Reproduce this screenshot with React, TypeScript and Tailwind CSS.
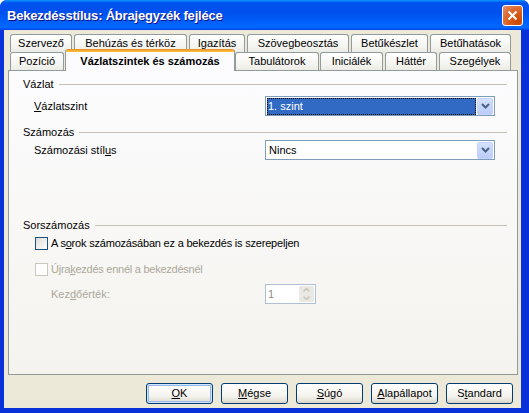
import React from "react";

const ROW1 = [
  { label: "Szervező", cls: "w-[62px]" },
  { label: "Behúzás és térköz", cls: "w-[113px]" },
  { label: "Igazítás", cls: "w-[56px]" },
  { label: "Szövegbeosztás", cls: "w-[102px]" },
  { label: "Betűkészlet", cls: "w-[77px]" },
  { label: "Betűhatások", cls: "w-[81px]" },
];

const ROW2_RIGHT = [
  { label: "Tabulátorok", cls: "w-[84px]" },
  { label: "Iniciálék", cls: "w-[63px] ml-[1px]" },
  { label: "Háttér", cls: "w-[52px] ml-[2px]" },
  { label: "Szegélyek", cls: "w-[72px] ml-[2px]" },
];

function Tab({ label, cls }: { label: string; cls: string }) {
  return (
    <div
      className={`${cls} flex h-[18px] items-center justify-center rounded-t-[3px] border border-b-0
      border-[#919b9c] bg-[linear-gradient(180deg,#ffffff,#f3f3ef_70%,#ecebe5)] text-[11px] leading-none text-black`}
    >
      {label}
    </div>
  );
}

function Chevron({ color = "#4d6185" }: { color?: string }) {
  return (
    <svg width="9" height="6" viewBox="0 0 9 6">
      <path d="M1 1 L4.5 4.5 L8 1" fill="none" stroke={color} strokeWidth="2" />
    </svg>
  );
}

function DropButton() {
  return (
    <div className="flex h-[17px] w-[16px] items-center justify-center rounded-[2px] border border-[#c3d3fd]
      bg-[linear-gradient(180deg,#d3e0fd,#bacdf8)]">
      <Chevron />
    </div>
  );
}

function GroupHeader({ label, className = "" }: { label: string; className?: string }) {
  return (
    <div className={`flex h-[14px] items-center gap-[5px] pl-[14px] pr-[10px] ${className}`}>
      <span className="text-[11px] leading-none text-black">{label}</span>
      <div className="h-px flex-1 bg-[#c5c2b5]" />
    </div>
  );
}

function XpButton({ children, isDefault = false }: { children: React.ReactNode; isDefault?: boolean }) {
  return (
    <button
      className={`flex h-[21px] w-[67px] items-center justify-center rounded-[3px] border border-[#003c74]
      bg-[linear-gradient(180deg,#ffffff,#f5f4ef_60%,#e3e0d6_90%,#d6d0c5)] text-[11px] leading-none text-black
      ${isDefault ? "shadow-[inset_0_0_0_1px_#cee7ff,inset_0_0_0_2px_#98b8ea]" : ""}`}
    >
      {children}
    </button>
  );
}

export default function App() {
  return (
    <div className="h-[413px] w-[529px] bg-white font-['Liberation_Sans',Arial,sans-serif]">
      <div className="flex h-full flex-col overflow-hidden rounded-t-[7px] bg-[#0831d9]">
        {/* title bar */}
        <div className="flex h-[30px] shrink-0 items-center justify-between pl-[7px] pr-[6px]
          bg-[linear-gradient(180deg,#0997ff,#0053ee_9%,#0050ee_40%,#0066ff_86%,#0066ff_92%,#005bff_95%,#003dd7)]">
          <span className="text-[13px] font-bold leading-none tracking-[-0.2px] text-white [text-shadow:1px_1px_#0f1089]">
            Bekezdésstílus: Ábrajegyzék fejléce
          </span>
          <div className="flex h-[21px] w-[21px] items-center justify-center rounded-[3px] border border-white
            bg-[radial-gradient(circle_at_80%_80%,#cc4600,#dc6527_55%,#e5937a_100%)]">
            <svg width="11" height="11" viewBox="0 0 11 11">
              <path d="M1.5 1.5 L9.5 9.5 M9.5 1.5 L1.5 9.5" stroke="#fff" strokeWidth="2" />
            </svg>
          </div>
        </div>

        {/* body */}
        <div className="ml-[4px] mr-[8px] flex h-[378px] flex-col bg-[#ece9d8] px-[4px]">
          {/* tabs */}
          <div className="relative z-10 mb-[-1px] flex flex-col pl-[2px] pt-[4px]">
            <div className="flex h-[18px] gap-[2px]">
              {ROW1.map((t) => (
                <Tab key={t.label} label={t.label} cls={t.cls} />
              ))}
            </div>
            <div className="flex h-[19px] items-start">
              <Tab label="Pozíció" cls="w-[54px]" />
              <div className="-mt-[3px] ml-[1px] flex h-[22px] w-[170px] flex-col overflow-hidden rounded-t-[3px]
                border-x border-[#919b9c] bg-[#fcfcfe]">
                <div className="h-[3px] shrink-0 bg-[linear-gradient(180deg,#e68b2c,#ffc73c)]" />
                <div className="flex flex-1 items-center justify-center text-[11px] font-bold leading-none text-black">
                  Vázlatszintek és számozás
                </div>
              </div>
              {ROW2_RIGHT.map((t) => (
                <Tab key={t.label} label={t.label} cls={t.cls} />
              ))}
            </div>
          </div>

          {/* tab page */}
          <div className="flex h-[305px] w-[510px] flex-col border border-[#919b9c]
            bg-[linear-gradient(180deg,#fcfcfe,#f4f3ee)] text-[11px] leading-none text-black">
            <GroupHeader label="Vázlat" className="mt-[6px]" />
            <div className="mt-[5px] flex h-[20px] items-center pl-[25px]">
              <span className="w-[231px]">
                <u>V</u>ázlatszint
              </span>
              <div className="flex h-[20px] w-[230px] items-center justify-between border border-[#7f9db9] bg-white p-px">
                <div className="flex h-[17px] w-[209px] items-center bg-[#316ac5] pl-[1px] text-white outline-1 outline-dotted outline-offset-[-1px] outline-black">
                  1. szint
                </div>
                <DropButton />
              </div>
            </div>

            <GroupHeader label="Számozás" className="mt-[9px]" />
            <div className="mt-[1px] flex h-[20px] items-center pl-[25px]">
              <span className="w-[231px]">
                Számozási stíl<u>u</u>s
              </span>
              <div className="flex h-[20px] w-[230px] items-center justify-between border border-[#7f9db9] bg-white p-px">
                <span className="pl-[2px]">Nincs</span>
                <DropButton />
              </div>
            </div>

            <GroupHeader label="Sorszámozás" className="mt-[58px]" />
            <div className="mt-[5px] flex h-[13px] items-center gap-[3px] pl-[26px]">
              <div className="h-[13px] w-[13px] border border-[#1c5180] bg-[linear-gradient(135deg,#dcdcd7,#ffffff)]" />
              <span className="tracking-[-0.2px]">
                A s<u>o</u>rok számozásában ez a bekezdés is szerepeljen
              </span>
            </div>
            <div className="mt-[13px] flex h-[13px] items-center gap-[3px] pl-[26px] text-[#aca899]">
              <div className="h-[13px] w-[13px] border border-[#cac8bb] bg-white" />
              <span className="tracking-[-0.25px]">
                Újra<u>k</u>ezdés ennél a bekezdésnél
              </span>
            </div>
            <div className="mt-[8px] flex h-[20px] items-center pl-[42px] text-[#aca899]">
              <span className="w-[214px]">
                Kez<u>d</u>őérték:
              </span>
              <div className="flex h-[20px] w-[51px] items-center justify-between border border-[#afc0d4] bg-white pl-[2px] pr-[1px]">
                <span className="text-[#8d8d8d]">1</span>
                <div className="flex h-[16px] w-[15px] flex-col items-center justify-around rounded-[2px] bg-[#e9e8e2]">
                  <svg width="7" height="4" viewBox="0 0 7 4">
                    <path d="M0.5 3.5 L3.5 0.5 L6.5 3.5" fill="none" stroke="#c9c7ba" strokeWidth="1.5" />
                  </svg>
                  <svg width="7" height="4" viewBox="0 0 7 4">
                    <path d="M0.5 0.5 L3.5 3.5 L6.5 0.5" fill="none" stroke="#c9c7ba" strokeWidth="1.5" />
                  </svg>
                </div>
              </div>
            </div>
          </div>

          {/* buttons */}
          <div className="mt-[8px] flex gap-[8px] pl-[138px]">
            <XpButton isDefault>
              <u>O</u>K
            </XpButton>
            <XpButton>
              <u>M</u>égse
            </XpButton>
            <XpButton>
              <u>S</u>úgó
            </XpButton>
            <XpButton>
              <u>A</u>lapállapot
            </XpButton>
            <XpButton>
              S<u>t</u>andard
            </XpButton>
          </div>
        </div>
      </div>
    </div>
  );
}
